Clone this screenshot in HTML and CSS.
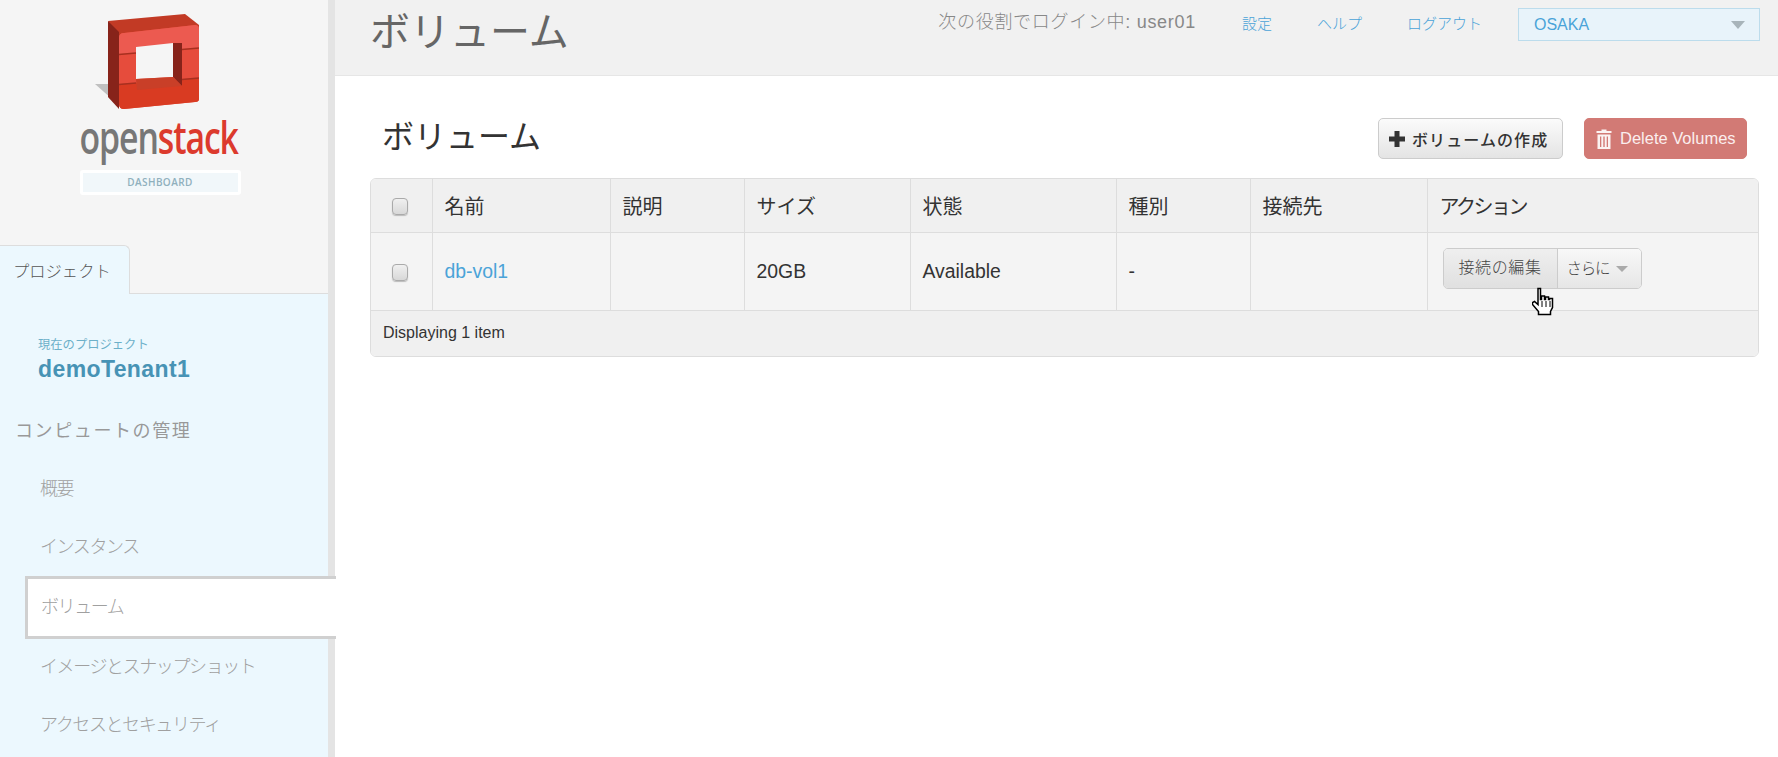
FILE: index.html
```html
<!DOCTYPE html>
<html lang="ja">
<head>
<meta charset="utf-8">
<title>ボリューム</title>
<link rel="stylesheet" href="styles.css">
</head>
<body>
<div class="page">
  <aside class="sidebar">
    <div class="brand">
      <svg class="logo" width="170" height="125" viewBox="0 0 170 125" aria-label="OpenStack">
        <polygon points="16,84 29,84 29,97 42,107" fill="#aaa" opacity=".7"/>
        <polygon points="29,21 106,14 120,25 120,32 40,38" fill="#c23a25"/>
        <polygon points="29,21 40,32 40,109 29,97" fill="#87231a"/>
        <path d="M40 38 Q40 33 45 33 L116 25 Q120 25 120 29 L120 99 Q120 102 116 102 L45 109 Q40 109 40 104 Z" fill="#e64c3c"/>
        <path d="M40 38 Q40 33 45 33 L116 25 Q120 25 120 29 L120 48 L103 49 L57 53 L40 54 Z" fill="#ec5a50"/>
        <path d="M40 84 L57 83 L103 79 L120 78 L120 99 Q120 102 116 102 L45 109 Q40 109 40 104 Z" fill="#d93b22"/>
        <polygon points="57,47 94,43 94,77 57,79" fill="#f5f5f5"/>
        <polygon points="94,43 103,43 103,86 94,77" fill="#87231a"/>
        <polygon points="57,79 94,77 103,86 58,90" fill="#c93f28"/>
        <path d="M40 54.500 L57 53 M103 49.500 L120 48 M40 84.500 L57 83 M103 79.500 L120 78" stroke="#a83020" stroke-width="1.500"/>
      </svg>
      <div class="wordmark"><span class="wm-open">open</span><span class="wm-stack">stack</span></div>
      <div class="dash-badge">DASHBOARD</div>
    </div>
    <div class="tabs"><div class="tab">プロジェクト</div></div>
    <div class="project-pane">
      <div class="current">
        <div class="current-label">現在のプロジェクト</div>
        <div class="current-name">demoTenant1</div>
      </div>
      <div class="nav-heading">コンピュートの管理</div>
      <ul class="nav">
        <li class="nav-item">概要</li>
        <li class="nav-item">インスタンス</li>
        <li class="nav-item active">ボリューム</li>
        <li class="nav-item">イメージとスナップショット</li>
        <li class="nav-item">アクセスとセキュリティ</li>
      </ul>
    </div>
  </aside>
  <main class="main">
    <header class="topbar">
      <h1 class="top-title">ボリューム</h1>
      <div class="top-right">
        <span class="login">次の役割でログイン中: user01</span>
        <a class="top-link">設定</a>
        <a class="top-link">ヘルプ</a>
        <a class="top-link">ログアウト</a>
        <div class="region"><span>OSAKA</span><i class="region-arrow"></i></div>
      </div>
    </header>
    <section class="content">
      <div class="title-row">
        <h2 class="page-title">ボリューム</h2>
        <div class="actions">
          <button class="btn btn-create">
            <svg width="18" height="18" viewBox="0 0 18 18"><path d="M6.500 1h5v5.500h5.500v5h-5.500v5.500h-5v-5.500h-5.500v-5h5.500z" fill="#333"/></svg>
            ボリュームの作成
          </button>
          <button class="btn btn-delete">
            <svg width="16" height="22" viewBox="0 0 16 22"><path d="M5.500 3V1.500h5V3h5v2H.500V3zM1.500 6.500h13V21h-13zM4 8.500V19h1.300V8.500zM7.300 8.500V19h1.400V8.500zM10.700 8.500V19H12V8.500z" fill="#fff" fill-rule="evenodd" opacity=".9"/></svg>
            Delete Volumes
          </button>
        </div>
      </div>
      <div class="table-wrap">
        <table class="vol-table">
          <thead>
            <tr>
              <th><span class="check"></span></th>
              <th>名前</th><th>説明</th><th>サイズ</th><th>状態</th><th>種別</th><th>接続先</th><th class="th-tight">アクション</th>
            </tr>
          </thead>
          <tbody>
            <tr>
              <td><span class="check"></span></td>
              <td><a class="vol-link">db-vol1</a></td>
              <td></td>
              <td>20GB</td>
              <td>Available</td>
              <td>-</td>
              <td></td>
              <td class="action-cell">
                <div class="btn-group">
                  <span class="grp-main">接続の編集</span>
                  <span class="grp-more">さらに<i class="caret"></i></span>
                </div>
                <svg class="cursor" width="24" height="30" viewBox="0 0 24 30"><path d="M7 1.500h2.500v11h1v-3.500h3v3.500h1v-2.500h3v2.500h1v-1h3v9l-2 4v3h-12v-3l-6-7v-2l2-1 3.500 3z" fill="#fff" stroke="#000" stroke-width="1.500" transform="translate(-1,0)"/><path d="M10 14v6M14 14v6M18 14v6" stroke="#000"/></svg>
              </td>
            </tr>
          </tbody>
          <tfoot>
            <tr><td colspan="8">Displaying 1 item</td></tr>
          </tfoot>
        </table>
      </div>
    </section>
  </main>
</div>
</body>
</html>
```

FILE: styles.css
```css
* { box-sizing: border-box; }
html, body { margin: 0; height: 100%; overflow: hidden; }
body {
  font-family: "Liberation Sans", "Noto Sans CJK JP", sans-serif;
  color: #333;
  background: #fff;
}
.page { display: flex; height: 757px; overflow: hidden; }

/* Sidebar */
.sidebar {
  width: 335px;
  flex: none;
  background: #f5f5f5;
  border-right: 7px solid #e4e4e4;
  display: flex;
  flex-direction: column;
  position: relative;
  z-index: 1;
}
.brand {
  height: 245px;
  display: flex;
  flex-direction: column;
  align-items: center;
  padding-right: 8px;
}
.logo { display: block; margin-left: 8px; flex: none; margin-bottom: -1px; }
.wordmark {
  font-family: "Open Sans", sans-serif;
  font-size: 46px;
  line-height: 46px;
  font-weight: 600;
  letter-spacing: -1.500px;
  transform: translateX(-1px) scaleX(.735);
  margin-top: -11px;
  white-space: nowrap;
}
.wm-open { color: #777; }
.wm-stack { color: #dc3a2d; }
.dash-badge {
  width: 161px;
  height: 25px;
  margin-top: 11px;
  border: 3px solid #fff;
  border-radius: 3px;
  background: #f1f7fa;
  color: #8fb0bd;
  font-family: "Open Sans", sans-serif;
  font-weight: 600;
  font-size: 10px;
  line-height: 19px;
  letter-spacing: .4px;
  text-align: center;
}
.tabs { height: 49px; border-bottom: 1px solid #ddd; flex: none; }
.tab {
  width: 130px;
  height: 49px;
  background: #ecf8fe;
  border: 1px solid #ddd;
  border-left: 0;
  border-bottom: 0;
  border-radius: 0 6px 0 0;
  font-size: 16.300px;
  line-height: 50px;
  padding-left: 13px;
  color: #555;
  font-weight: 300;
}
.project-pane { flex: 1; background: #ecf8fe; padding-top: 42px; }
.current { padding-left: 38px; }
.current-label { font-size: 12.300px; line-height: 18px; color: #6cb0c9; }
.current-name { font-size: 23px; line-height: 30px; font-weight: 700; letter-spacing: .4px; color: #4793b5; }
.nav-heading {
  margin-top: 34px;
  padding-left: 15px;
  font-size: 18px;
  line-height: 26px;
  letter-spacing: 1.600px;
  color: #999;
}
.nav { list-style: none; margin: 16px 0 0; padding: 0; }
.nav-item {
  height: 58px;
  line-height: 58px;
  padding-left: 40px;
  font-size: 18px;
  letter-spacing: -1.400px;
  color: #a0a0a0;
  font-weight: 300;
}
.nav-item.active {
  height: 63px;
  margin: 0 -8px -1px 25px;
  padding-left: 13px;
  line-height: 57px;
  background: #fff;
  border: 3px solid #d0d0d0;
  border-right: 0;
}

/* Main */
.main { flex: 1; min-width: 0; display: flex; flex-direction: column; }
.topbar {
  height: 76px;
  flex: none;
  background: #f1f1f1;
  border-bottom: 1px solid #e6e6e6;
  display: flex;
  justify-content: space-between;
  align-items: flex-start;
  padding: 0 18px 0 35px;
}
.top-title {
  margin: 10px 0 0;
  font-size: 40px;
  line-height: 44px;
  font-weight: 400;
  color: #666;
}
.top-right { display: flex; align-items: flex-start; padding-top: 8px; }
.login { font-size: 18px; line-height: 28px; letter-spacing: .7px; color: #888; font-weight: 300; margin-right: 46px; }
.top-link { font-size: 15px; line-height: 32px; color: #4aa3d8; margin-right: 45px; font-weight: 300; }
.top-link:nth-child(4) { margin-right: 36px; }
.region {
  width: 242px;
  height: 33px;
  background: #e8f3fa;
  border: 1px solid #bcdcec;
  display: flex;
  align-items: center;
  justify-content: space-between;
  padding: 0 14px 0 15px;
  font-size: 16px;
  color: #4aa3d8;
}
.region-arrow {
  width: 0; height: 0;
  border-left: 7px solid transparent;
  border-right: 7px solid transparent;
  border-top: 8px solid #a8b4ba;
}
.content { padding: 42px 19px 0 35px; }
.title-row { display: flex; justify-content: space-between; align-items: flex-start; height: 60px; padding: 0 12px; }
.page-title { margin: 0; font-size: 32px; line-height: 38px; font-weight: 400; color: #333; }
.actions { display: flex; gap: 21px; }
.btn {
  height: 41px;
  display: flex;
  align-items: center;
  gap: 6px;
  border-radius: 5px;
  font-family: inherit;
  padding: 0;
}
.btn-create {
  width: 185px;
  padding-left: 9px;
  background: linear-gradient(#fbfbfb, #e4e4e4);
  border: 1px solid #ccc;
  font-size: 16px;
  letter-spacing: 1.100px;
  color: #333;
  font-weight: 500;
}
.btn-delete {
  width: 163px;
  padding-left: 11px;
  gap: 8px;
  background: #d27a75;
  border: 1px solid #d27a75;
  color: #fbeeee;
  font-size: 16.500px;
}
.table-wrap { border: 1px solid #ddd; border-radius: 6px; overflow: hidden; }
.vol-table { border-collapse: collapse; table-layout: fixed; width: 100%; }
.vol-table th, .vol-table td {
  border-right: 1px solid #ddd;
  padding: 0 11px 0 12px;
  font-size: 19.400px;
  text-align: left;
  vertical-align: middle;
}
.vol-table th:last-child, .vol-table td:last-child { border-right: 0; }
.vol-table th { font-size: 20px; font-weight: 400; background: #f0f0f0; height: 53px; border-bottom: 1px solid #ddd; }
.vol-table .th-tight { letter-spacing: -2.500px; }
.vol-table tbody td { background: #f4f4f4; height: 78px; border-bottom: 1px solid #ddd; }
.vol-table tfoot td { background: #f0f0f0; height: 46px; font-size: 16px; padding-left: 12px; border-right: 0; }
.vol-table th:nth-child(1) { width: 61px; text-align: center; padding: 0 2px 0 0; }
.vol-table tbody td:nth-child(1) { text-align: center; padding: 0 2px 0 0; }
.vol-table th:nth-child(2) { width: 178px; }
.vol-table th:nth-child(3) { width: 134px; }
.vol-table th:nth-child(4) { width: 166px; }
.vol-table th:nth-child(5) { width: 206px; }
.vol-table th:nth-child(6) { width: 134px; }
.vol-table th:nth-child(7) { width: 177px; }
.check {
  display: inline-block;
  width: 16px;
  height: 17px;
  vertical-align: middle;
  background: linear-gradient(#f0f0f0, #d8d8d8);
  border: 1px solid #aaa;
  border-radius: 4px;
  box-shadow: 0 1px 1px #bbb;
}
.vol-link { color: #4aa3d8; }
.action-cell { position: relative; padding-left: 15px !important; }
.btn-group {
  display: inline-flex;
  height: 41px;
  width: 199px;
  margin-top: -5px;
  vertical-align: top;
  border: 1px solid #ccc;
  border-radius: 5px;
  overflow: hidden;
  font-size: 16px;
  font-weight: 300;
  line-height: 37px;
  color: #444;
}
.grp-main {
  width: 114px;
  padding-left: 15px;
  letter-spacing: .6px;
  background: linear-gradient(#efefef, #e0e0e0);
  border-right: 1px solid #ccc;
}
.grp-more {
  flex: 1;
  padding-left: 9px;
  letter-spacing: -1.200px;
  font-size: 15.500px;
  background: linear-gradient(#f8f8f8, #e6e6e6);
  display: flex;
  align-items: center;
}
.caret {
  width: 0; height: 0;
  margin-left: 7px;
  border-left: 6px solid transparent;
  border-right: 6px solid transparent;
  border-top: 6px solid #aaa;
}
.cursor { position: absolute; left: 104px; top: 54px; }
```
